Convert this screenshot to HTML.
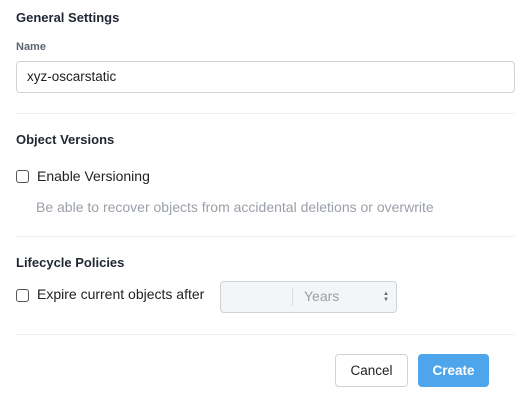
<!DOCTYPE html><html><head><style>
body{margin:0;width:530px;height:402px;background:#fff;font-family:"Liberation Sans",sans-serif;color:#222;position:relative;overflow:hidden}
.a{position:absolute;white-space:nowrap}
.h{font-weight:bold;font-size:13px;color:#1f2733}
.sep{position:absolute;left:16px;width:499px;height:1px;background:#eceef1}
.cb{position:absolute;width:11px;height:11px;border:1px solid #555;border-radius:3px;background:#fff}
</style></head><body>
<div class="a h" style="left:16px;top:10px">General Settings</div>
<div class="a" style="left:16px;top:41px;font-size:11px;color:#5d6470;font-weight:bold">Name</div>
<div class="a" style="left:16px;top:61px;width:497px;height:30px;border:1px solid #cfd3d8;border-radius:4px;"></div>
<div class="a" style="left:27px;top:69px;font-size:13.5px;color:#222">xyz-oscarstatic</div>
<div class="sep" style="top:113px"></div>
<div class="a h" style="left:16px;top:132px">Object Versions</div>
<div class="cb" style="left:16px;top:170px"></div>
<div class="a" style="left:37px;top:168px;font-size:14px">Enable Versioning</div>
<div class="a" style="left:36px;top:199px;font-size:14px;color:#9aa0a8">Be able to recover objects from accidental deletions or overwrite</div>
<div class="sep" style="top:236px"></div>
<div class="a h" style="left:16px;top:255px">Lifecycle Policies</div>
<div class="cb" style="left:16px;top:289px"></div>
<div class="a" style="left:37px;top:286px;font-size:14px">Expire current objects after</div>
<div class="a" style="left:220px;top:281px;width:175px;height:30px;border:1px solid #cfd3d8;border-radius:4px;background:#f4f5f7"></div>
<div class="a" style="left:292px;top:288px;width:1px;height:18px;background:#d8dbe0"></div>
<div class="a" style="left:304px;top:288px;font-size:14px;color:#9aa0a8">Years</div>
<div class="a" style="left:383px;top:291px;font-size:6px;line-height:6px;color:#666">▲<br>▼</div>
<div class="sep" style="top:334px"></div>
<div class="a" style="left:335px;top:354px;width:71px;height:31px;border:1px solid #cfd3d8;border-radius:4px;text-align:center;line-height:31px;font-size:13.5px">Cancel</div>
<div class="a" style="left:418px;top:354px;width:71px;height:33px;background:#4ea5ec;border-radius:4px;text-align:center;line-height:33px;font-size:13.5px;color:#fff;font-weight:bold">Create</div>
</body></html>
